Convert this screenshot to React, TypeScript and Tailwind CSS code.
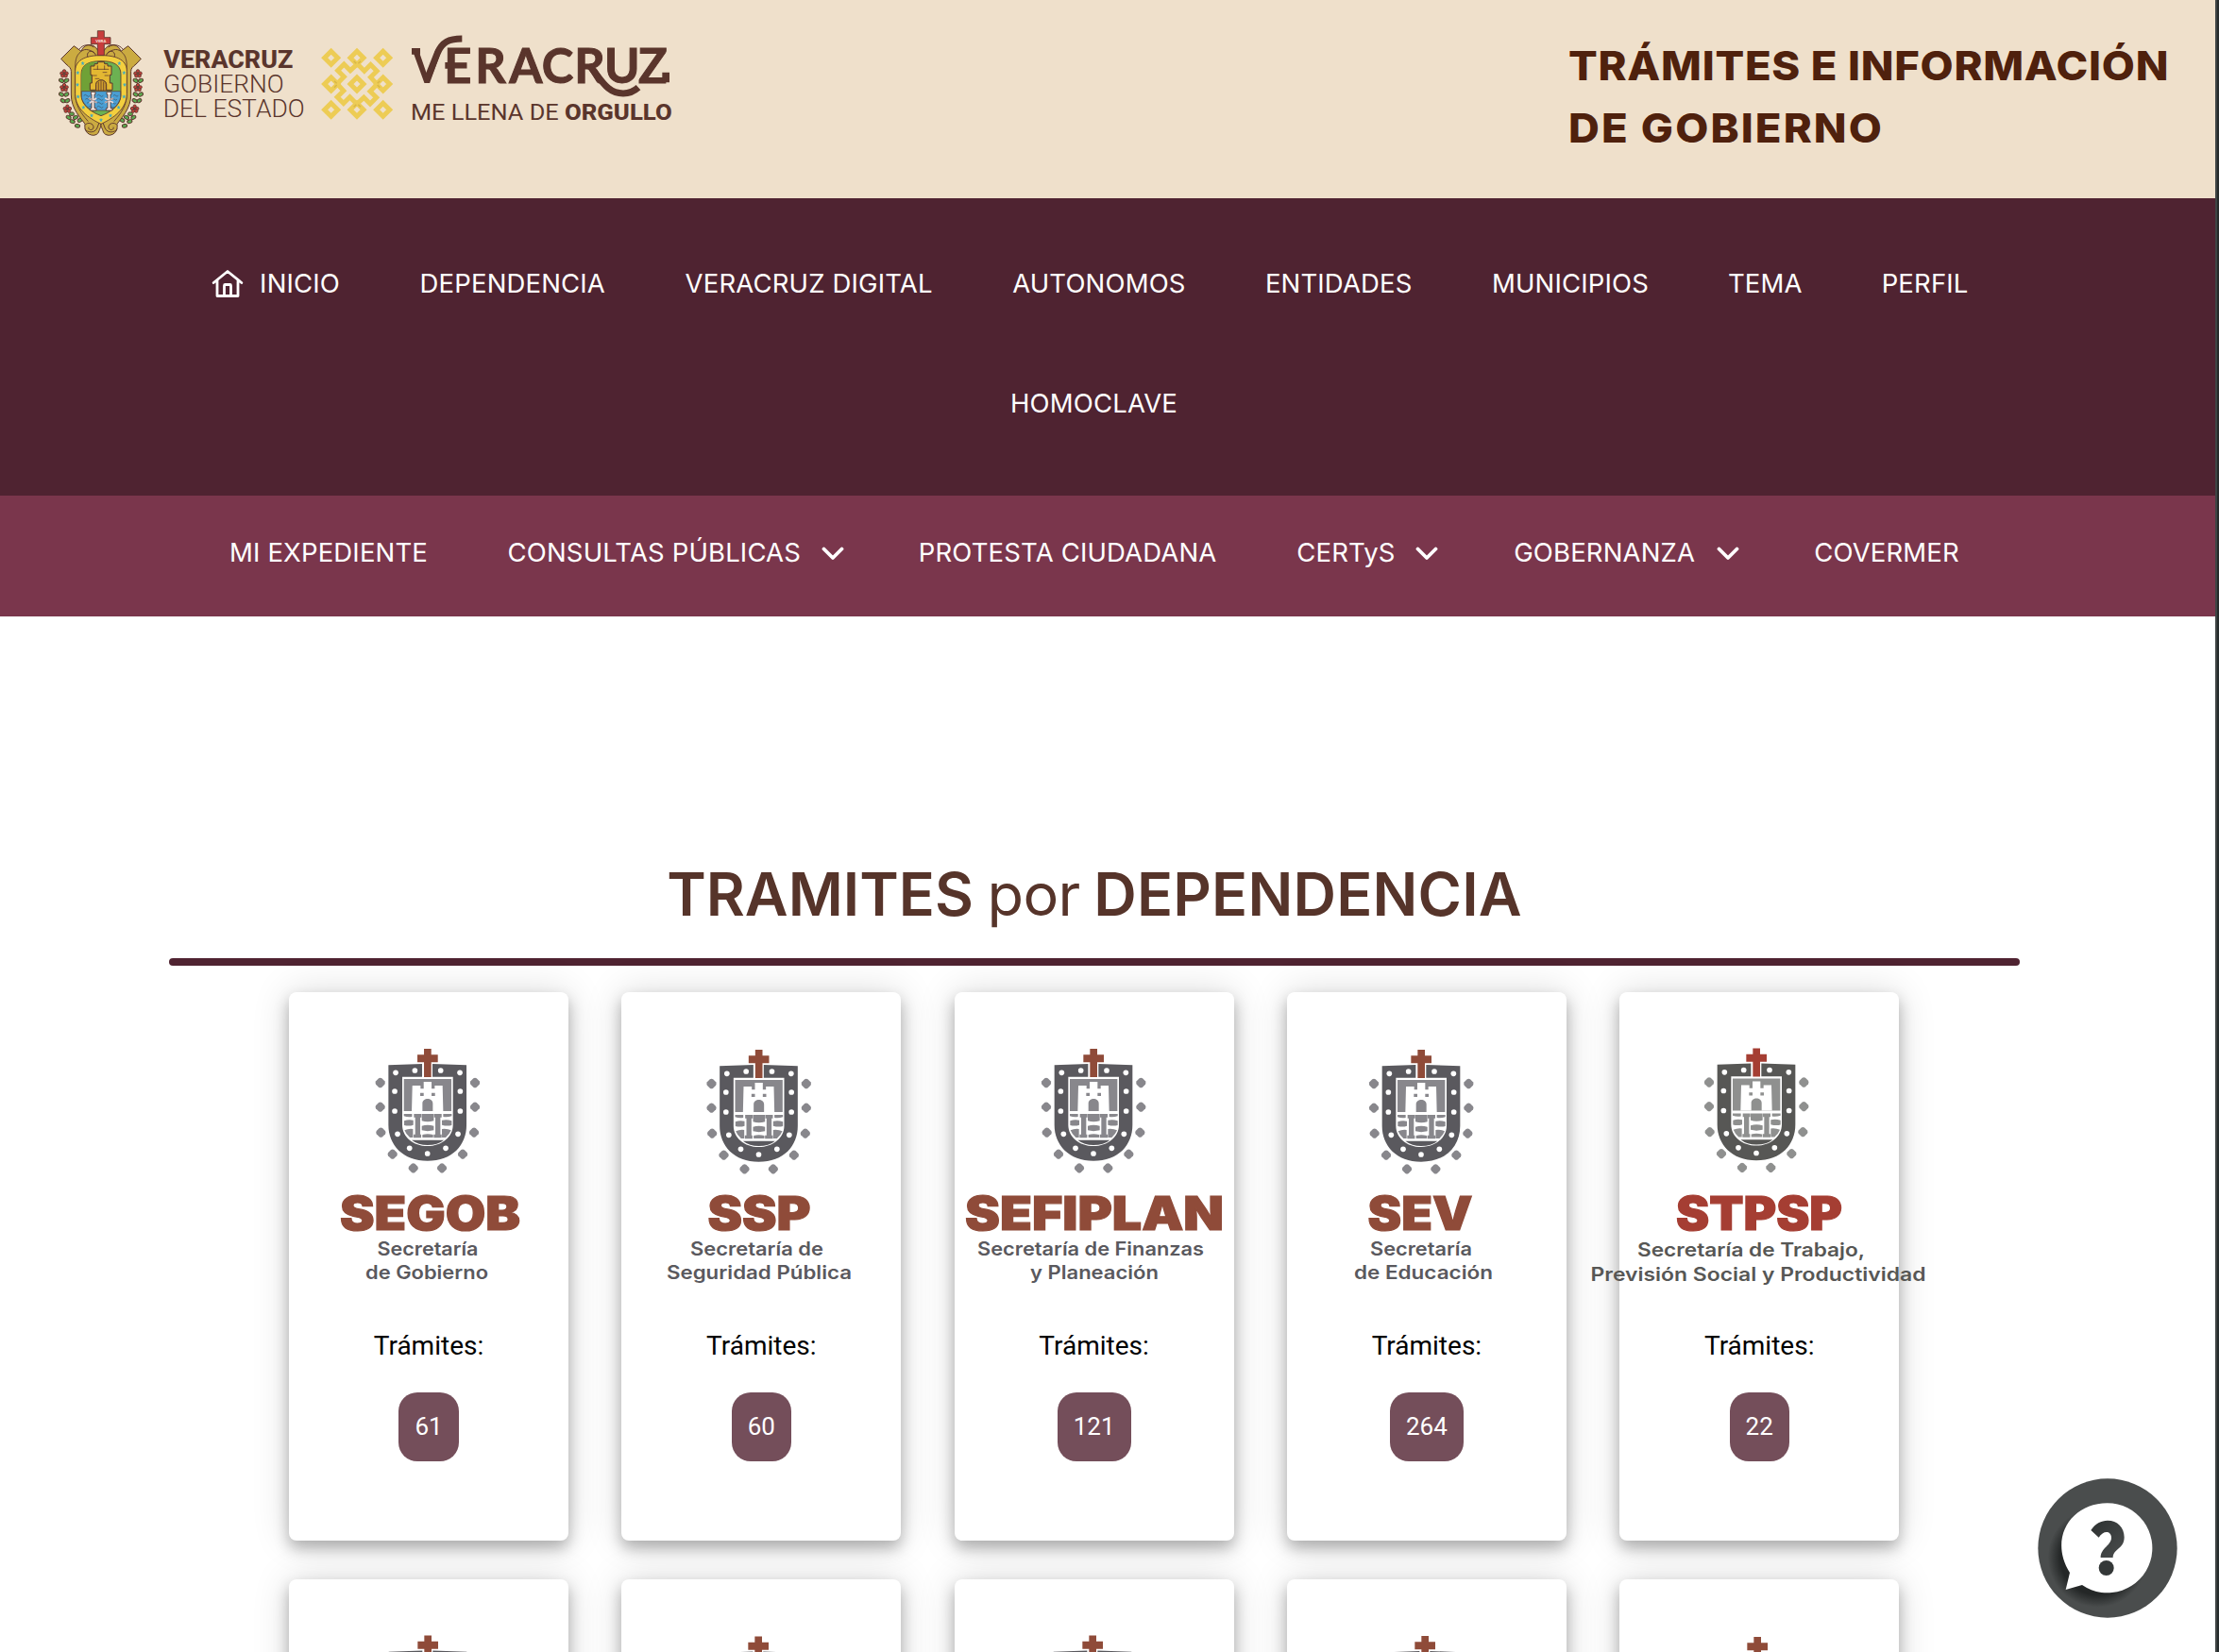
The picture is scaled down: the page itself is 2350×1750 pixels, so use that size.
import React from "react";

function StateEmblem() {
  const ink = "#5a352c";
  return (
    <svg className="h-[140px] w-[300px] shrink-0" viewBox="0 0 900 420" fill="none">
      {[0, 1].map((side) => (
        <g key={side} transform={side ? "translate(402 0) scale(-1 1)" : undefined}>
          {[[84, 174], [84, 218], [94, 286]].map(([x, y]) => (
            <g key={y} fill="#c6403a" stroke={ink} strokeWidth="2.5">
              <circle cx={x} cy={y - 8} r="5" />
              <circle cx={x - 8} cy={y - 1} r="5" />
              <circle cx={x + 8} cy={y - 1} r="5" />
              <circle cx={x - 5} cy={y + 7} r="5" />
              <circle cx={x + 5} cy={y + 7} r="5" />
              <circle cx={x} cy={y} r="2.5" fill={ink} />
            </g>
          ))}
          {[[75, 196, 30], [91, 196, -30], [75, 240, 30], [91, 240, -30], [80, 260, 30], [94, 260, -30], [108, 302, 0], [98, 313, 30], [120, 313, -30], [110, 326, 20], [134, 322, -30], [126, 340, 10]].map(([x, y, r]) => (
            <ellipse key={`${x}-${y}`} cx={x} cy={y} rx="8" ry="5.5" fill="#5bab50" stroke={ink} strokeWidth="2.8" transform={`rotate(${r} ${x} ${y})`} />
          ))}
          <path d="M74 127 115 86 138 103C146 80 170 77 184 91L201 112V342C192 356 197 368 176 370 155 368 147 352 150 334 139 318 105 285 106 240V166C106 157 99 151 90 144Z" fill="#cbab41" stroke={ink} strokeWidth="3" />
          <path d="M138 103C120 118 119 132 119 166V238C119 285 152 315 160 326" stroke={ink} strokeWidth="2.5" />
          <path d="M139 103C150 92 170 99 181 110M162 126C150 113 164 95 178 106 192 116 180 137 163 130M132 96C144 80 166 80 178 90" stroke={ink} strokeWidth="2.8" />
          <path d="M151 337C157 327 178 331 177 345 175 357 158 353 162 344M149 350C158 362 180 364 188 348L195 330" stroke={ink} strokeWidth="2.8" />
        </g>
      ))}
      <path d="M201 116C160 116 119 126 119 166V238C119 285 160 315 201 334 242 315 283 285 283 238V166C283 126 242 116 201 116Z" fill="#f3cf3e" stroke={ink} strokeWidth="2.5" />
      <path d="M201 134C165 134 138 144 138 176V244C140 278 174 298 201 308 228 298 262 278 264 244V176C264 144 237 134 201 134Z" fill="#6cb152" stroke={ink} strokeWidth="2.5" />
      <path d="M139 230V176C139 150 156 140 178 136V230Z" fill="#6fa136" />
      <path d="M139 230H263V250C258 270 244 284 230 291H172C156 281 143 268 139 250Z" fill="#4a9fd4" stroke={ink} strokeWidth="2" />
      {[244, 256, 268, 280].map((y, i) => (
        <path key={y} d={`M${146 + i * 5} ${y}q5-6 10 0t10 0M188 ${y}q5-6 10 0t10 0M${240 - i * 4} ${y}q4-5 8 0t8 0`} stroke="#42586c" strokeWidth="2.2" />
      ))}
      <path d="M166 226V204H172V178H168V150H180V143H190V137H212V143H222V150H234V178H229V204H237V226H218V208C216 190 187 190 185 208V226Z" fill="#e3b832" stroke={ink} strokeWidth="3" />
      <path d="M185 228V208C187 190 216 190 217 208V228Z" fill="#cf9e2d" stroke={ink} strokeWidth="2.5" />
      <path d="M201 196V228M193 200V228M209 200V228M176 160H226M190 148V162M212 148V162M174 180H188M212 180H226M182 190H196M206 170H220" stroke={ink} strokeWidth="2.2" />
      <path d="M169 232H183V240H180V284H186V291H167V284H171V240H169ZM219 232H234V240H231V284H237V291H217V284H222V240H219Z" fill="#f4e9e3" stroke={ink} strokeWidth="2.5" />
      <path d="M162 252 188 266M164 268 186 252M213 266 240 252M214 252 240 266" stroke="#e7d7d7" strokeWidth="5" />
      <path d="M162 252 188 266M213 266 240 252" stroke={ink} strokeWidth="1.5" />
      {[[143, 141], [127, 171], [126, 209], [128, 247], [145, 281], [171, 307], [201, 321], [231, 307], [257, 281], [274, 247], [276, 209], [274, 171], [259, 141]].map(([x, y]) => (
        <path key={`${x}-${y}`} d={`M${x} ${y - 5}l1.500 3.500h3.500l-3 2.500 1 4-3-2-3 2 1-4-3-2.500h3.500z`} fill="#38a8c9" stroke="#38a8c9" />
      ))}
      <path d="M190 38H211V59H231V80H211V116H190V80H169V59H190Z" fill="#c83c3c" stroke={ink} strokeWidth="2.5" />
      <text x="184" y="74" textLength="33" lengthAdjust="spacingAndGlyphs" fill="#f7e7dc" className="font-['Roboto'] text-[11px] font-bold">VERA</text>
      <g fill={ink} className="font-['Roboto']">
        <text x="400" y="157" textLength="411" lengthAdjust="spacingAndGlyphs" className="text-[80px] font-extrabold">VERACRUZ</text>
        <text x="399" y="235" textLength="383" lengthAdjust="spacingAndGlyphs" className="text-[80px] font-light">GOBIERNO</text>
        <text x="398" y="313" textLength="450" lengthAdjust="spacingAndGlyphs" className="text-[80px] font-light">DEL ESTADO</text>
      </g>
    </svg>
  );
}

const braid = [[62, 124], [144, 124], [227, 124], [62, 207], [144, 207], [227, 207], [62, 289], [144, 289], [227, 289]];

function BrandMark() {
  return (
    <svg className="h-[140px] w-[390px] shrink-0" viewBox="30 0 1170 420" fill="none">
      <g stroke="#edcc55" strokeWidth="15">
        {braid.map(([x, y]) => (
          <path key={`${x}-${y}`} d={`M${x} ${y - 21}l21 21-21 21-21-21z`} />
        ))}
        {[0, 90, 180, 270].map((r) => (
          <path key={r} d="M78 209 103 184 83 164 103 144 123 164 148 141" transform={`rotate(${r} 144.500 207)`} />
        ))}
      </g>
      <g stroke="#d8b746" strokeWidth="4">
        <path d="M134 134 142 142M156 134 148 142M72 197 80 205M72 218 80 210M217 197 209 205M217 218 209 210M134 280 142 272M156 280 148 272" />
      </g>
      <g fill="#5a352c">
        <text x="319" y="203" textLength="96" lengthAdjust="spacingAndGlyphs" className="font-['Lato'] text-[152px] font-bold">V</text>
        <text x="421 520 628 731 835 930 1038" y="203" stroke="#5a352c" strokeWidth="3" className="font-['Lato'] text-[152px] font-bold">ERACRUZ</text>
        <path d="M318 93H345V113H318ZM1114 170H1137V202H1114ZM424 138H445V158H424Z" />
        <path d="M369 186 400 108C415 74 435 63 478 63M884 150C922 196 940 237 990 237 1012 237 1026 229 1038 218" fill="none" stroke="#5a352c" strokeWidth="21" />
        <text x="315" y="320" textLength="470" lengthAdjust="spacingAndGlyphs" className="font-['Roboto'] text-[71px] font-normal">ME LLENA DE</text>
        <text x="804" y="320" textLength="341" lengthAdjust="spacingAndGlyphs" className="font-['Roboto'] text-[71px] font-extrabold">ORGULLO</text>
      </g>
    </svg>
  );
}

type Palette = { accent: string; dark: string; gray: string };
const warm: Palette = { accent: "#8f4b39", dark: "#5a595e", gray: "#88878c" };
const red: Palette = { accent: "#a53e33", dark: "#575755", gray: "#8f908f" };

function Crest({ dx, dy, palette }: { dx: number; dy: number; palette: Palette }) {
  const { accent, dark, gray } = palette;
  return (
    <g transform={`translate(${dx} ${dy}) scale(.33333) translate(-488 -243)`}>
      <path d="M364 295 471 291V332H408V485C408 522 442 552 488 552 534 552 569 522 569 485V332H504V291L612 295V485C612 548 568 599 488 599 410 599 364 548 364 485Z" fill={dark} />
      <path d="M413 339H564V441H413Z" fill={gray} />
      <path d="M438 441 440 360H466V370H476V348H501V370H511V360H536L538 441H505V417C505 397 472 397 472 417V441Z" fill="#fff" />
      <path d="M465 383H476V393H465ZM501 383H512V393H501Z" fill={gray} />
      <path d="M413 450H439V459Q425 461 413 457ZM538 450H565V457Q552 461 538 459ZM470 450H508V472Q488 478 470 472ZM414 472Q428 466 443 470V485Q430 490 414 486ZM534 470Q550 466 565 472V486Q550 490 534 485ZM470 488Q488 482 508 488V502Q488 507 470 502ZM415 502Q428 496 442 498V525H432Q420 515 415 502ZM534 498Q550 496 563 502Q558 515 546 525H534ZM472 516Q488 511 506 516V525H472Z" fill={gray} />
      <path d="M445 450H469V461H465V515H468V526H444V515H449V461H445ZM509 450H533V461H529V515H533V526H508V515H513V461H509Z" fill={gray} />
      <path d="M438 533H540Q521 549 488 549 459 549 438 533Z" fill={dark} />
      <path d="M477 243H500V262H521V286H500V333H477V286H456V262H477Z" fill={accent} />
      {[[387, 319], [448, 312], [530, 312], [591, 319], [384, 378], [592, 378], [384, 441], [592, 441], [393, 514], [585, 514], [431, 559], [546, 559], [488, 576]].map(([x, y]) => (
        <circle key={`${x}-${y}`} cx={x} cy={y} r="8.500" fill="#fff" />
      ))}
      {[[338, 351], [639, 351], [338, 428], [639, 428], [340, 509], [636, 509], [377, 578], [600, 578], [443, 622], [534, 622]].map(([x, y]) => (
        <path key={`${x}-${y}`} d={`M${x - 5} ${y - 14}Q${x} ${y - 17} ${x + 5} ${y - 14}L${x + 14} ${y - 5}Q${x + 17} ${y} ${x + 14} ${y + 5}L${x + 5} ${y + 14}Q${x} ${y + 17} ${x - 5} ${y + 14}L${x - 14} ${y + 5}Q${x - 17} ${y} ${x - 14} ${y - 5}Z`} fill={gray} />
      ))}
    </g>
  );
}

type Line = { text: string; x: number; w: number; y: number };
type Dep = { crest: [number, number]; palette: Palette; name: Line; sub: Line[]; count: number };

const deps: Dep[] = [
  {
    crest: [146.7, 60], palette: warm, count: 61,
    name: { text: "SEGOB", x: 54, w: 191, y: 251.5 },
    sub: [{ text: "Secretaría", x: 93.5, w: 107, y: 279 }, { text: "de Gobierno", x: 81, w: 130, y: 303.5 }],
  },
  {
    crest: [145.5, 61], palette: warm, count: 60,
    name: { text: "SSP", x: 91.5, w: 109, y: 251.5 },
    sub: [{ text: "Secretaría de", x: 73, w: 141, y: 279 }, { text: "Seguridad Pública", x: 48, w: 196, y: 303.5 }],
  },
  {
    crest: [147, 60], palette: warm, count: 121,
    name: { text: "SEFIPLAN", x: 11, w: 274, y: 251.5 },
    sub: [{ text: "Secretaría de Finanzas", x: 24, w: 240, y: 279 }, { text: "y Planeación", x: 80, w: 136, y: 303.5 }],
  },
  {
    crest: [142, 61], palette: warm, count: 264,
    name: { text: "SEV", x: 85.5, w: 111, y: 251.5 },
    sub: [{ text: "Secretaría", x: 88, w: 108, y: 279 }, { text: "de Educación", x: 71, w: 147, y: 303.5 }],
  },
  {
    crest: [145, 59.5], palette: red, count: 22,
    name: { text: "STPSP", x: 60, w: 176, y: 251.5 },
    sub: [{ text: "Secretaría de Trabajo,", x: 19, w: 241, y: 280 }, { text: "Previsión Social y Productividad", x: -30.5, w: 355, y: 306 }],
  },
];

const nextRow: [number, number][] = [[147, 59.5], [145, 60.5], [146, 59.5], [146, 60], [146, 61]];

const cardClass =
  "flex h-[581px] w-[296px] flex-col items-center rounded-lg bg-white shadow-[0_8px_16px_rgba(0,0,0,0.28),0_0_40px_rgba(0,0,0,0.14)]";

function DependencyCard({ dep }: { dep: Dep }) {
  return (
    <article className={cardClass}>
      <svg className="h-[320px] w-[296px] shrink-0 overflow-visible" viewBox="0 0 296 320">
        <Crest dx={dep.crest[0]} dy={dep.crest[1]} palette={dep.palette} />
        <text x={dep.name.x} y={dep.name.y} textLength={dep.name.w} lengthAdjust="spacingAndGlyphs" fill={dep.palette.accent} stroke={dep.palette.accent} strokeWidth="1.2" className="font-['Inter'] text-[49px] font-black">
          {dep.name.text}
        </text>
        {dep.sub.map((l) => (
          <text key={l.text} x={l.x} y={l.y} textLength={l.w} lengthAdjust="spacingAndGlyphs" fill={dep.palette.dark} className="font-['Inter'] text-[20px] font-semibold">
            {l.text}
          </text>
        ))}
      </svg>
      <p className="mt-[35px] text-[28px] leading-10 text-black">Trámites:</p>
      <span className="mt-[29px] flex h-[73px] items-center rounded-[20px] bg-[#744e5a] px-[17px] text-[26px] text-white">{dep.count}</span>
    </article>
  );
}

function HomeIcon() {
  return (
    <svg className="h-[32px] w-[34px]" viewBox="0 0 34 32" fill="none" stroke="white" strokeWidth="2.8" strokeLinecap="round" strokeLinejoin="round">
      <path d="M2.200 14.500 17 2.500 31.800 14.500M6 12V28.500H28V12M13.500 28V17.500Q13.500 16.500 14.500 16.500H19.500Q20.500 16.500 20.500 17.500V28" />
    </svg>
  );
}

function Chevron() {
  return (
    <svg className="-mr-[6px] h-6 w-6" viewBox="0 0 24 24" fill="none" stroke="white" strokeWidth="3.800" strokeLinecap="round" strokeLinejoin="round">
      <path d="M2.500 7.500 12 17 21.500 7.500" />
    </svg>
  );
}

const mainNav = [
  { text: "DEPENDENCIA", w: "w-[196px]" },
  { text: "VERACRUZ DIGITAL", w: "w-[262px]" },
  { text: "AUTONOMOS", w: "w-[183px]" },
  { text: "ENTIDADES", w: "w-[155px]" },
  { text: "MUNICIPIOS", w: "w-[166px]" },
  { text: "TEMA", w: "w-[77px]" },
  { text: "PERFIL", w: "w-[92px]" },
];

const subNav = [
  { text: "MI EXPEDIENTE", w: "w-[210px]", menu: false },
  { text: "CONSULTAS PÚBLICAS", w: "w-[310px]", menu: true },
  { text: "PROTESTA CIUDADANA", w: "w-[316px]", menu: false },
  { text: "CERTyS", w: "w-[104px]", menu: true },
  { text: "GOBERNANZA", w: "w-[194px]", menu: true },
  { text: "COVERMER", w: "w-[154px]", menu: false },
];

function HelpButton() {
  return (
    <button className="absolute top-[1566px] left-[2158px] h-[148px] w-[148px]" aria-label="Ayuda">
      <svg className="h-full w-full" viewBox="85 78 444 444">
        <defs>
          <radialGradient id="shade" gradientUnits="userSpaceOnUse" cx="275" cy="330" r="158">
            <stop offset="0.750" stopColor="#242727" />
            <stop offset="1" stopColor="#4a4d4d" />
          </radialGradient>
          <linearGradient id="mark" x1="0" y1="0" x2="1" y2="1">
            <stop offset="0" stopColor="#2d3131" />
            <stop offset="1" stopColor="#4a4d4d" />
          </linearGradient>
        </defs>
        <circle cx="307" cy="300" r="221" fill="#4a4d4d" />
        <circle cx="275" cy="330" r="158" fill="url(#shade)" />
        <path d="M187 378C119 270 190 157 306 157A142.500 142.500 0 1 1 226 417L174 432Z" fill="white" />
        <path d="M254 243C267 222 287 212 307 212 338 212 360 234 360 265 360 303 325 302 324 330H285C284 300 320 290 319 266 318 244 293 243 279 266Z" fill="url(#mark)" />
        <circle cx="303" cy="363" r="24" fill="#343838" />
      </svg>
    </button>
  );
}

export default function App() {
  return (
    <div className="relative flex h-[1750px] w-[2350px] overflow-hidden bg-white font-['Roboto',sans-serif]">
      <main className="flex w-[2346px] shrink-0 flex-col">
        <header className="flex h-[210px] shrink-0 justify-between bg-[#efe0cb] pl-10">
          <div className="flex pt-5">
            <StateEmblem />
            <BrandMark />
          </div>
          <h1 className="flex w-[685px] origin-left scale-x-[1.057] flex-col pt-[36px] font-['Inter',sans-serif] text-[43px] leading-[66px] font-extrabold whitespace-nowrap text-[#4f210d]">
            <span className="tracking-[0.7px]">TRÁMITES E INFORMACIÓN</span>
            <span className="tracking-[2px]">DE GOBIERNO</span>
          </h1>
        </header>

        <nav className="flex h-[315px] shrink-0 flex-col bg-[#4f2331] pt-[27px] font-['Inter',sans-serif] text-[27.5px] tracking-[0.15px] text-white">
          <div className="flex h-[127px] items-center gap-[84.8px] pl-[224px] whitespace-nowrap">
            <a className="flex w-[136px] items-center justify-between">
              <HomeIcon />
              <span>INICIO</span>
            </a>
            {mainNav.map((n) => (
              <a key={n.text} className={`flex justify-center ${n.w}`}>{n.text}</a>
            ))}
          </div>
          <div className="flex h-[127px] items-center pl-[1070px]">
            <a className="flex w-[177px] justify-center">HOMOCLAVE</a>
          </div>
        </nav>

        <nav className="flex h-[128px] shrink-0 items-center gap-[84.8px] bg-[#7a364c] pb-[7px] pl-[243px] font-['Inter',sans-serif] text-[27.5px] tracking-[0.15px] whitespace-nowrap text-white">
          {subNav.map((n) => (
            <a key={n.text} className="flex items-center gap-[22px]">
              <span className={`flex justify-center ${n.w}`}>{n.text}</span>
              {n.menu && <Chevron />}
            </a>
          ))}
        </nav>

        <section className="flex flex-col pt-[254px]">
          <h2 className="flex h-[80px] w-[2318px] items-center justify-center gap-[14.5px] font-['Inter',sans-serif] text-[63px] text-[#56342a]">
            <b className="font-semibold">TRAMITES</b>
            <span className="tracking-[-0.6px]">por</span>
            <b className="font-semibold tracking-[0.2px]">DEPENDENCIA</b>
          </h2>
          <div className="mt-[28px] ml-[179px] h-2 w-[1960px] rounded-full bg-[#4f2331]" />
          <div className="mt-[28px] ml-[306px] grid grid-cols-[repeat(5,296px)] gap-x-[56.3px] gap-y-[41px]">
            {deps.map((d) => (
              <DependencyCard key={d.name.text} dep={d} />
            ))}
            {nextRow.map(([x, y], i) => (
              <article key={i} className={cardClass}>
                <svg className="h-[320px] w-[296px]" viewBox="0 0 296 320">
                  <Crest dx={x} dy={y} palette={warm} />
                </svg>
              </article>
            ))}
          </div>
        </section>
      </main>
      <div className="w-1 shrink-0 border-l-2 border-[#3f4444] bg-[#262b2b]" />
      <HelpButton />
    </div>
  );
}
